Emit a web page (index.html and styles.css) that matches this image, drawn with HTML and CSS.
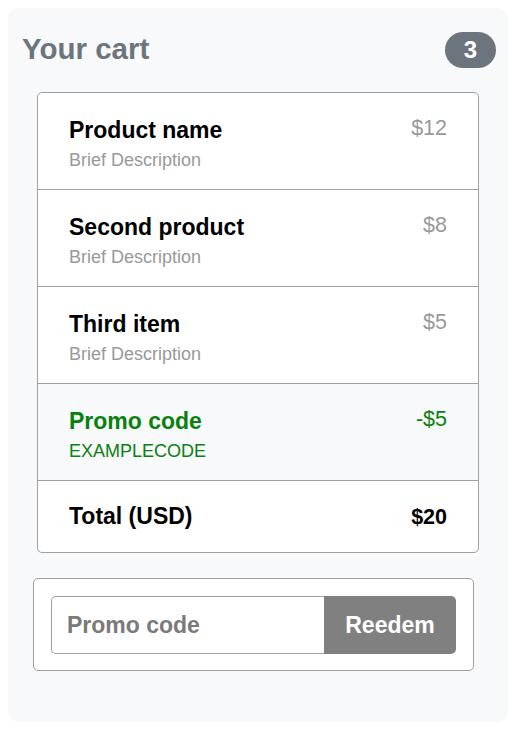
FILE: index.html
```html
<!DOCTYPE html>
<html lang="en">
<head>
<meta charset="utf-8">
<title>Your cart</title>
<link rel="stylesheet" href="styles.css">
</head>
<body>
<div class="panel">
  <div class="header">
    <h4 class="heading">Your cart</h4>
    <span class="badge">3</span>
  </div>
  <ul class="list">
    <li class="row">
      <div>
        <h6 class="title">Product name</h6>
        <small class="desc">Brief Description</small>
      </div>
      <span class="price">$12</span>
    </li>
    <li class="row">
      <div>
        <h6 class="title">Second product</h6>
        <small class="desc">Brief Description</small>
      </div>
      <span class="price">$8</span>
    </li>
    <li class="row">
      <div>
        <h6 class="title">Third item</h6>
        <small class="desc">Brief Description</small>
      </div>
      <span class="price">$5</span>
    </li>
    <li class="row promo">
      <div>
        <h6 class="title">Promo code</h6>
        <small class="desc">EXAMPLECODE</small>
      </div>
      <span class="price">-$5</span>
    </li>
    <li class="row total">
      <span class="total-label">Total (USD)</span>
      <strong class="total-value">$20</strong>
    </li>
  </ul>
  <form class="card">
    <div class="input-group">
      <input class="code-input" type="text" placeholder="Promo code">
      <button class="redeem" type="button">Reedem</button>
    </div>
  </form>
</div>
</body>
</html>
```
FILE: styles.css
```css
* { box-sizing: border-box; }
html, body { margin: 0; padding: 0; background: #fff; }
body {
  padding: 8px 11px 8px 8px;
  font-family: "Liberation Sans", Arial, sans-serif;
  color: #000;
}
.panel {
  width: 500px;
  background: #f8f9fa;
  border-radius: 10px;
  padding: 24px 12px 51px 14px;
}
.header {
  display: flex;
  justify-content: space-between;
  align-items: flex-start;
}
.heading {
  margin: 0;
  font-size: 29.5px;
  line-height: 34px;
  font-weight: bold;
  color: #6c757d;
}
.badge {
  display: inline-block;
  height: 36px;
  width: 51px;
  border-radius: 18px;
  background: #6c757d;
  color: #fff;
  font-size: 24px;
  font-weight: bold;
  line-height: 36px;
  text-align: center;
}
.list {
  list-style: none;
  margin: 24px 17px 0 15px;
  padding: 0;
  background: #fff;
  border: 1px solid #a0a0a0;
  border-radius: 5px;
  overflow: hidden;
}
.row {
  display: flex;
  justify-content: space-between;
  align-items: flex-start;
  height: 96px;
  padding: 23px 31px 0 31px;
}
.row + .row {
  border-top: 1px solid #a0a0a0;
  height: 97px;
}
.title {
  margin: 0;
  font-size: 23px;
  line-height: 28px;
  font-weight: bold;
}
.desc {
  display: block;
  margin-top: 4px;
  font-size: 18px;
  line-height: 24px;
  color: #999;
}
.price {
  font-size: 21.5px;
  line-height: 24px;
  color: #999;
}
.promo {
  background: #f8f9fa;
  color: #0a800f;
}
.promo .desc, .promo .price { color: #0a800f; }
.row.total {
  height: 72px;
  padding-top: 21px;
  align-items: baseline;
}
.total-label {
  font-size: 23px;
  line-height: 28px;
  font-weight: bold;
}
.total-value {
  font-size: 21.5px;
  line-height: 28px;
  font-weight: bold;
}
.card {
  margin: 25px 22px 0 11px;
  background: #fff;
  border: 1px solid #a0a0a0;
  border-radius: 5px;
  padding: 17px 17px 16px 17px;
}
.input-group {
  display: flex;
  height: 58px;
}
.code-input {
  width: 273px;
  height: 58px;
  margin: 0;
  border: 1px solid #a0a0a0;
  border-right: none;
  border-radius: 5px 0 0 5px;
  padding: 0 15px;
  font-family: "Liberation Sans", Arial, sans-serif;
  font-size: 23px;
  font-weight: bold;
  color: #555;
  background: #fff;
  outline: none;
}
.code-input::placeholder {
  color: #7a7a7a;
  opacity: 1;
}
.redeem {
  width: 132px;
  height: 58px;
  margin: 0;
  border: none;
  border-radius: 0 5px 5px 0;
  background: #808080;
  color: #fff;
  font-family: "Liberation Sans", Arial, sans-serif;
  font-size: 23px;
  font-weight: bold;
  padding: 0;
}
```
